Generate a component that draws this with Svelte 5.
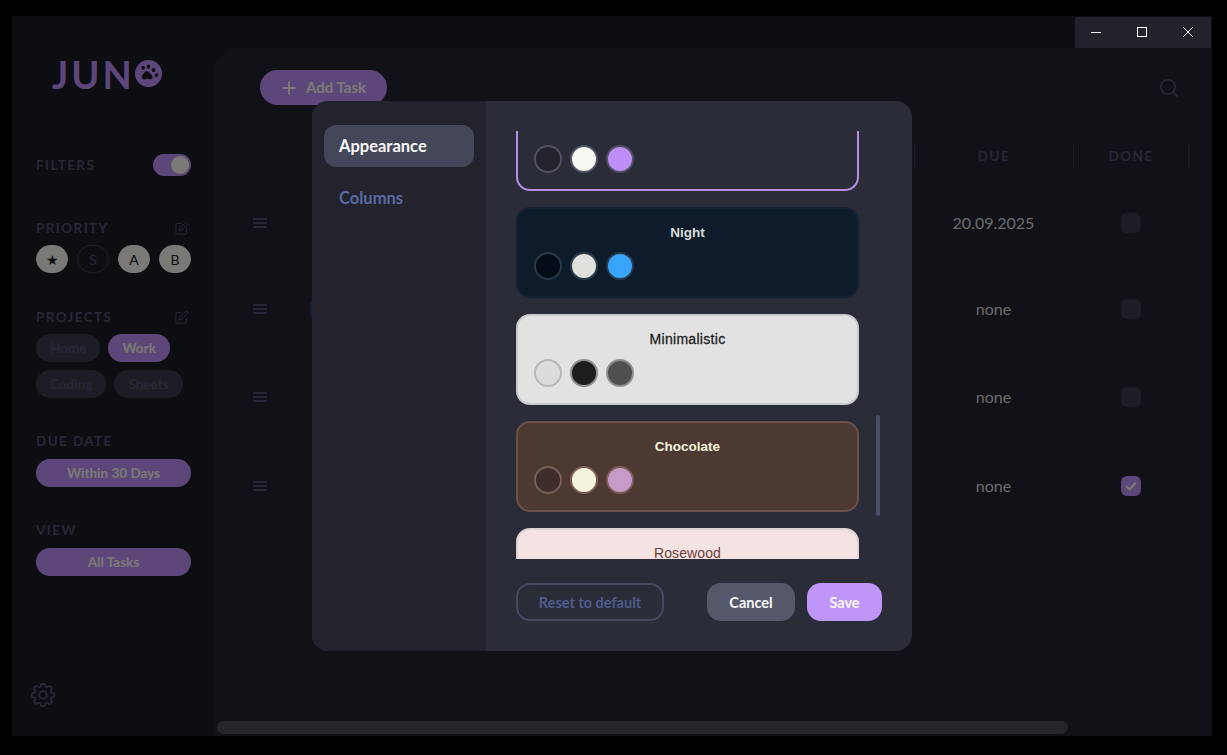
<script lang="ts">
    const priorities = [
        { label: "★", active: true },
        { label: "S", active: false },
        { label: "A", active: true },
        { label: "B", active: true },
    ];
    const projectRows = [
        [
            { label: "Home", active: false },
            { label: "Work", active: true },
        ],
        [
            { label: "Coding", active: false },
            { label: "Sheets", active: false },
        ],
    ];
    const rows = [
        { due: "20.09.2025", done: false, tag: false },
        { due: "none", done: false, tag: true },
        { due: "none", done: false, tag: false },
        { due: "none", done: true, tag: false },
    ];
    const themes = [
        { name: "Default", cls: "selected" },
        { name: "Night", cls: "night" },
        { name: "Minimalistic", cls: "minimal" },
        { name: "Chocolate", cls: "chocolate" },
        { name: "Rosewood", cls: "rosewood" },
    ];

    let themeList: HTMLElement | undefined = $state();

    // the list is opened part way down, the first card is cut by the top edge
    $effect(() => {
        if (themeList) themeList.scrollTop = 31;
    });
</script>

<div class="window">
    <aside class="sidebar">
        <div class="logo">
            <span>JUN</span>
            <svg viewBox="0 0 27 27" width="27" height="27" aria-hidden="true">
                <circle cx="13.5" cy="13.5" r="13.5" fill="#bb8ff5" />
                <g fill="#1a1c24">
                    <path d="M10.6 11.6c1.6-.9 3.1.2 4.4 1.6 1.1 1.2 2.7 2 2.6 3.9-.1 1.7-1.7 2.6-3.2 2.1-1.4-.5-2.6-.5-3.9.1-1.7.7-3.5-.2-3.8-2-.3-1.6.8-2.4 1.6-3.4.7-.8 1.2-1.8 2.3-2.3z" />
                    <ellipse cx="8.2" cy="7.8" rx="1.7" ry="2" transform="rotate(-15 8.2 7.8)" />
                    <ellipse cx="13.5" cy="6.6" rx="1.8" ry="2.2" transform="rotate(5 13.5 6.6)" />
                    <ellipse cx="18.5" cy="10" rx="1.8" ry="2.1" transform="rotate(30 18.5 10)" />
                    <ellipse cx="21.5" cy="15.2" rx="1.6" ry="2" transform="rotate(40 21.5 15.2)" />
                </g>
            </svg>
        </div>

        <div class="filters-row">
            <span class="section-label">FILTERS</span>
            <span class="toggle"><span class="knob"></span></span>
        </div>

        <section class="group priority">
            <div class="group-head">
                <span class="section-label">PRIORITY</span>
                <svg class="edit" viewBox="0 0 24 24" width="15" height="15" aria-hidden="true">
                    <path d="M11 4H5a2 2 0 0 0-2 2v13a2 2 0 0 0 2 2h13a2 2 0 0 0 2-2v-6" />
                    <path d="M18.5 2.5a2.1 2.1 0 0 1 3 3L12 15l-4 1 1-4z" />
                </svg>
            </div>
            <div class="priority-chips">
                {#each priorities as p}
                    <span class="priority-chip" class:active={p.active}>{p.label}</span>
                {/each}
            </div>
        </section>

        <section class="group projects">
            <div class="group-head">
                <span class="section-label">PROJECTS</span>
                <svg class="edit" viewBox="0 0 24 24" width="15" height="15" aria-hidden="true">
                    <path d="M11 4H5a2 2 0 0 0-2 2v13a2 2 0 0 0 2 2h13a2 2 0 0 0 2-2v-6" />
                    <path d="M18.5 2.5a2.1 2.1 0 0 1 3 3L12 15l-4 1 1-4z" />
                </svg>
            </div>
            {#each projectRows as row}
                <div class="project-row">
                    {#each row as project}
                        <span class="project-chip" class:active={project.active}>{project.label}</span>
                    {/each}
                </div>
            {/each}
        </section>

        <section class="group due-date">
            <span class="section-label">DUE DATE</span>
            <span class="wide-chip">Within 30 Days</span>
        </section>

        <section class="group view">
            <span class="section-label">VIEW</span>
            <span class="wide-chip">All Tasks</span>
        </section>

        <svg class="gear" viewBox="0 0 24 24" width="30" height="30" aria-hidden="true">
            <path d="M10.343 3.94c.09-.542.56-.94 1.11-.94h1.093c.55 0 1.02.398 1.11.94l.149.894c.07.424.384.764.78.93.398.164.855.142 1.205-.108l.737-.527a1.125 1.125 0 011.45.12l.773.774c.39.389.44 1.002.12 1.45l-.527.737c-.25.35-.272.806-.107 1.204.165.397.505.71.93.78l.893.15c.543.09.94.56.94 1.109v1.094c0 .55-.397 1.02-.94 1.11l-.893.149c-.425.07-.765.383-.93.78-.165.398-.143.854.107 1.204l.527.738c.32.447.269 1.06-.12 1.45l-.774.773a1.125 1.125 0 01-1.449.12l-.738-.527c-.35-.25-.806-.272-1.203-.107-.397.165-.71.505-.781.929l-.149.894c-.09.542-.56.94-1.11.94h-1.094c-.55 0-1.019-.398-1.11-.94l-.148-.894c-.071-.424-.384-.764-.781-.93-.398-.164-.854-.142-1.204.108l-.738.527c-.447.32-1.06.269-1.45-.12l-.773-.774a1.125 1.125 0 01-.12-1.45l.527-.737c.25-.35.273-.806.108-1.204-.165-.397-.505-.71-.93-.78l-.894-.15c-.542-.09-.94-.56-.94-1.109v-1.094c0-.55.398-1.02.94-1.11l.894-.149c.424-.07.765-.383.93-.78.165-.398.143-.854-.107-1.204l-.527-.738a1.125 1.125 0 01.12-1.45l.773-.773a1.125 1.125 0 011.45-.12l.737.527c.35.25.807.272 1.204.107.397-.165.71-.505.78-.929l.15-.894z" />
            <circle cx="12" cy="12" r="3" />
        </svg>
    </aside>

    <main class="main">
        <div class="toolbar">
            <button type="button" class="add-task">
                <svg viewBox="0 0 14 14" width="14" height="14" aria-hidden="true">
                    <path d="M7 0.5v13M0.5 7h13" />
                </svg>
                Add Task
            </button>
            <svg class="search" viewBox="0 0 20 20" width="20" height="20" aria-hidden="true">
                <circle cx="9" cy="9" r="7.2" />
                <path d="M14.4 14.4L18.6 18.6" />
            </svg>
        </div>

        <div class="table">
            <div class="head">
                <span class="head-spacer"></span>
                <span class="head-cell">DUE</span>
                <span class="head-cell">DONE</span>
            </div>
            {#each rows as row}
                <div class="row">
                    <span class="handle">
                        <span></span><span></span><span></span>
                    </span>
                    <span class="title-cell">
                        {#if row.tag}<span class="tag"></span>{/if}
                    </span>
                    <span class="due-cell">{row.due}</span>
                    <span class="done-cell">
                        <span class="checkbox" class:checked={row.done}>
                            {#if row.done}
                                <svg viewBox="0 0 12 12" width="12" height="12" aria-hidden="true">
                                    <path d="M1.5 6.5l3 3 6-6.5" />
                                </svg>
                            {/if}
                        </span>
                    </span>
                </div>
            {/each}
        </div>

        <div class="h-scroll"></div>
    </main>

    <div class="overlay">
        <div class="modal">
            <nav class="modal-nav">
                <span class="nav-item current">Appearance</span>
                <span class="nav-item">Columns</span>
            </nav>
            <div class="modal-body">
                <div class="theme-area">
                    <div class="theme-list" bind:this={themeList}>
                        {#each themes as theme}
                            <div class="theme-card {theme.cls}">
                                <div class="theme-name">{theme.name}</div>
                                <div class="swatches">
                                    <span class="swatch s1"></span>
                                    <span class="swatch s2"></span>
                                    <span class="swatch s3"></span>
                                </div>
                            </div>
                        {/each}
                    </div>
                    <div class="thumb"></div>
                </div>
                <div class="modal-footer">
                    <button type="button" class="btn reset">Reset to default</button>
                    <button type="button" class="btn cancel">Cancel</button>
                    <button type="button" class="btn save">Save</button>
                </div>
            </div>
        </div>
    </div>

    <div class="win-controls">
        <span class="win-btn">
            <svg viewBox="0 0 10 10" width="10" height="10" aria-hidden="true"><path d="M0 5.5h10" /></svg>
        </span>
        <span class="win-btn">
            <svg viewBox="0 0 10 10" width="10" height="10" aria-hidden="true"><rect x="0.5" y="0.5" width="9" height="9" /></svg>
        </span>
        <span class="win-btn">
            <svg viewBox="0 0 10 10" width="10" height="10" aria-hidden="true"><path d="M0 0l10 10M10 0L0 10" /></svg>
        </span>
    </div>
</div>

<style>
    :global(body) {
        margin: 0;
        background: #000;
        font-family: "Lato", "Open Sans", sans-serif;
    }

    .window {
        position: relative;
        display: flex;
        width: 1200px;
        height: 720px;
        margin: 16px 0 0 12px;
        background: #1a1c24;
        overflow: hidden;
    }

    /* Sidebar */
    .sidebar {
        position: relative;
        box-sizing: border-box;
        width: 202px;
        flex-shrink: 0;
        padding: 0 23px 0 24px;
    }

    .logo {
        display: flex;
        align-items: center;
        height: 27px;
        margin: 44px 0 0 16px;
        color: #bb8ff5;
        font-size: 38px;
        font-weight: 700;
        letter-spacing: 3px;
    }

    .section-label {
        display: block;
        font-size: 13.5px;
        font-weight: 700;
        letter-spacing: 1.4px;
        line-height: 18px;
        color: #4b5070;
    }

    .filters-row {
        display: flex;
        align-items: center;
        justify-content: space-between;
        height: 22px;
        margin-top: 67px;
    }

    .toggle {
        display: flex;
        align-items: center;
        justify-content: flex-end;
        box-sizing: border-box;
        width: 38px;
        height: 22px;
        padding-right: 2px;
        border-radius: 11px;
        background: #bb8ff5;
    }

    .knob {
        width: 18px;
        height: 18px;
        border-radius: 50%;
        background: #f4f2ea;
    }

    .group-head {
        display: flex;
        align-items: center;
        justify-content: space-between;
    }

    .edit {
        margin-right: 2px;
        fill: none;
        stroke: #4b5070;
        stroke-width: 1.6;
        stroke-linecap: round;
        stroke-linejoin: round;
    }

    .priority {
        margin-top: 43px;
    }

    .priority-chips {
        display: flex;
        gap: 9px;
        margin-top: 8px;
    }

    .priority-chip {
        display: flex;
        align-items: center;
        justify-content: center;
        box-sizing: border-box;
        width: 32px;
        height: 28px;
        border: 1.5px solid #3f4150;
        border-radius: 14px;
        font-size: 14px;
        color: #4b5070;
    }

    .priority-chip.active {
        border-color: #f4f2ea;
        background: #f4f2ea;
        color: #1a1c24;
    }

    .projects {
        margin-top: 35px;
    }

    .project-row {
        display: flex;
        gap: 8px;
        margin-top: 8px;
    }

    .project-chip {
        display: flex;
        align-items: center;
        height: 28px;
        padding: 0 14px;
        border-radius: 14px;
        background: #3a3c4a;
        font-size: 13.5px;
        font-weight: 700;
        color: #4b5070;
    }

    .project-chip.active {
        background: #bb8ff5;
        color: #f4f2ea;
    }

    .due-date {
        margin-top: 34px;
    }

    .view {
        margin-top: 34px;
    }

    .wide-chip {
        display: flex;
        align-items: center;
        justify-content: center;
        height: 28px;
        margin-top: 9px;
        border-radius: 14px;
        background: #bb8ff5;
        font-size: 13.5px;
        font-weight: 700;
        color: #f4f2ea;
    }

    .gear {
        position: absolute;
        left: 16px;
        bottom: 26px;
        fill: none;
        stroke: #4b5070;
        stroke-width: 1.5;
    }

    /* Main panel */
    .main {
        position: relative;
        flex: 1;
        margin-top: 32px;
        border-top-left-radius: 26px;
        background: #22242e;
    }

    .toolbar {
        display: flex;
        align-items: center;
        justify-content: space-between;
        height: 35px;
        padding: 22px 33px 0 46px;
    }

    .add-task {
        display: flex;
        align-items: center;
        gap: 10px;
        height: 35px;
        padding: 0 21px 2px 22px;
        border: none;
        border-radius: 18px;
        background: #bb8ff5;
        font-family: inherit;
        font-size: 15px;
        font-weight: 700;
        color: #f4f2ea;
    }

    .add-task svg {
        margin-top: 2px;
        fill: none;
        stroke: #f4f2ea;
        stroke-width: 1.8;
    }

    .search {
        fill: none;
        stroke: #4b5070;
        stroke-width: 1.6;
        stroke-linecap: round;
    }

    .table {
        display: grid;
        grid-template-rows: 36px 86px 86px 90px 88px;
        margin-top: 39px;
    }

    .head,
    .row {
        display: grid;
        grid-template-columns: 60px 640px 159px 116px;
        align-items: center;
    }

    .head {
        height: 24px;
        grid-template-columns: 700px 159px 116px;
    }

    .head-cell {
        display: flex;
        align-items: center;
        justify-content: center;
        height: 24px;
        border-left: 1px solid #3a3c4a;
        font-size: 13.5px;
        font-weight: 700;
        letter-spacing: 1.4px;
        color: #4b5070;
    }

    .head-cell:last-child {
        border-right: 1px solid #3a3c4a;
    }

    .handle {
        display: flex;
        flex-direction: column;
        gap: 2px;
        width: 14px;
        margin-left: 39px;
    }

    .handle span {
        height: 2px;
        background: #4b5070;
    }

    .title-cell {
        padding-left: 36px;
    }

    .tag {
        display: block;
        width: 6px;
        height: 16px;
        border-radius: 2px;
        background: #2a3f75;
    }

    .due-cell {
        padding-bottom: 2px;
        text-align: center;
        font-size: 16px;
        color: #d6d5d2;
    }

    .done-cell {
        display: flex;
        justify-content: center;
    }

    .checkbox {
        display: flex;
        align-items: center;
        justify-content: center;
        width: 20px;
        height: 20px;
        border-radius: 6px;
        background: #3a3c4a;
    }

    .checkbox.checked {
        background: #bb8ff5;
    }

    .checkbox svg {
        fill: none;
        stroke: #f4f2ea;
        stroke-width: 2;
        stroke-linecap: round;
        stroke-linejoin: round;
    }

    .h-scroll {
        position: absolute;
        left: 3px;
        bottom: 2px;
        width: 851px;
        height: 13px;
        border-radius: 7px;
        background: #4a4c58;
    }

    /* Modal */
    .overlay {
        position: absolute;
        inset: 0;
        display: flex;
        align-items: center;
        justify-content: center;
        background: rgba(0, 0, 0, 0.5);
    }

    .modal {
        display: flex;
        width: 600px;
        height: 550px;
        border-radius: 16px;
        overflow: hidden;
        background: #2a2c38;
    }

    .modal-nav {
        display: flex;
        flex-direction: column;
        gap: 10px;
        box-sizing: border-box;
        width: 174px;
        padding: 24px 12px;
        background: #22232c;
    }

    .nav-item {
        display: flex;
        align-items: center;
        height: 42px;
        padding: 0 15px;
        border-radius: 12px;
        font-size: 16.5px;
        font-weight: 700;
        color: #5a6aa5;
    }

    .nav-item.current {
        background: #444659;
        color: #f8f8f5;
    }

    .modal-body {
        flex: 1;
        display: flex;
        flex-direction: column;
        padding: 30px;
    }

    .theme-area {
        position: relative;
        height: 428px;
    }

    .theme-list {
        display: flex;
        flex-direction: column;
        gap: 16px;
        height: 100%;
        width: 343px;
        overflow: hidden;
    }

    .thumb {
        position: absolute;
        left: 360px;
        top: 284px;
        width: 4px;
        height: 101px;
        border-radius: 2px;
        background: #4a4d68;
    }

    .theme-card {
        flex-shrink: 0;
        box-sizing: border-box;
        height: 91px;
        padding: 16px;
        border: 2px solid;
        border-radius: 14px;
        font-family: "Liberation Sans", Arial, sans-serif;
    }

    .theme-name {
        height: 14px;
        text-align: center;
        font-size: 13.5px;
        line-height: 16px;
        font-weight: 700;
    }

    .swatches {
        display: flex;
        gap: 8px;
        margin-top: 13px;
    }

    .swatch {
        box-sizing: border-box;
        width: 28px;
        height: 28px;
        border: 2px solid;
        border-radius: 50%;
    }

    .selected {
        border-color: #b48fe9;
        background: #2a2c38;
        color: #f8f8f5;
    }

    .selected .swatch { border-color: #4f5060; }
    .selected .s1 { background: #22232c; }
    .selected .s2 { background: #f8f8f2; }
    .selected .s3 { background: #bd8ff7; }

    .night {
        border-color: #122338;
        background: #0e1b2a;
        color: #dcdcdc;
    }

    .night .swatch { border-color: #2a3a4d; }
    .night .s1 { background: #040d17; }
    .night .s2 { background: #e0e0dc; }
    .night .s3 { background: #38a5fb; }

    .minimal {
        border-color: #c9c9c9;
        background: #e2e2e2;
        color: #1e1e1e;
    }

    .minimal .theme-name {
        font-size: 14px;
        line-height: 14px;
        font-weight: 400;
        letter-spacing: 0.3px;
        -webkit-text-stroke: 0.3px #1e1e1e;
    }

    .minimal .swatch { border-color: #8e8e8e; }
    .minimal .s1 { background: #dcdcdc; border-color: #b8b8b8; }
    .minimal .s2 { background: #1e1e1e; }
    .minimal .s3 { background: #505050; }

    .chocolate {
        border-color: #6b5148;
        background: #4c3931;
        color: #f6f3dc;
    }

    .chocolate .swatch { border-color: #7a5f57; }
    .chocolate .s1 { background: #3f2c2b; }
    .chocolate .s2 { background: #f6f3dc; }
    .chocolate .s3 { background: #c89cc9; }

    .rosewood {
        border-color: #e0d2d2;
        background: #f5e3e3;
        color: #6a3f3a;
    }

    .rosewood .theme-name {
        font-size: 14px;
        line-height: 14px;
        font-weight: 400;
        letter-spacing: 0.1px;
    }

    .modal-footer {
        display: flex;
        gap: 12px;
        margin-top: 24px;
    }

    .btn {
        box-sizing: border-box;
        height: 38px;
        border: none;
        border-radius: 14px;
        font-family: inherit;
        font-size: 14.5px;
        font-weight: 700;
    }

    .reset {
        width: 148px;
        margin-right: 31px;
        border: 2px solid #454860;
        background: transparent;
        color: #4e5c8e;
    }

    .cancel {
        width: 88px;
        background: #55576b;
        color: #f8f8f5;
    }

    .save {
        width: 75px;
        background: #c095f8;
        color: #f8f8f5;
    }

    /* Window controls stay above the overlay */
    .win-controls {
        position: absolute;
        top: 1px;
        right: 1px;
        display: flex;
        box-sizing: border-box;
        height: 31px;
        padding-bottom: 1px;
        background: #21222c;
    }

    .win-btn {
        display: flex;
        align-items: center;
        justify-content: center;
        box-sizing: border-box;
        width: 46px;
    }

    .win-btn:first-child {
        width: 44px;
        padding-right: 2px;
    }

    .win-btn svg {
        fill: none;
        stroke: #fff;
        stroke-width: 1;
    }
</style>
